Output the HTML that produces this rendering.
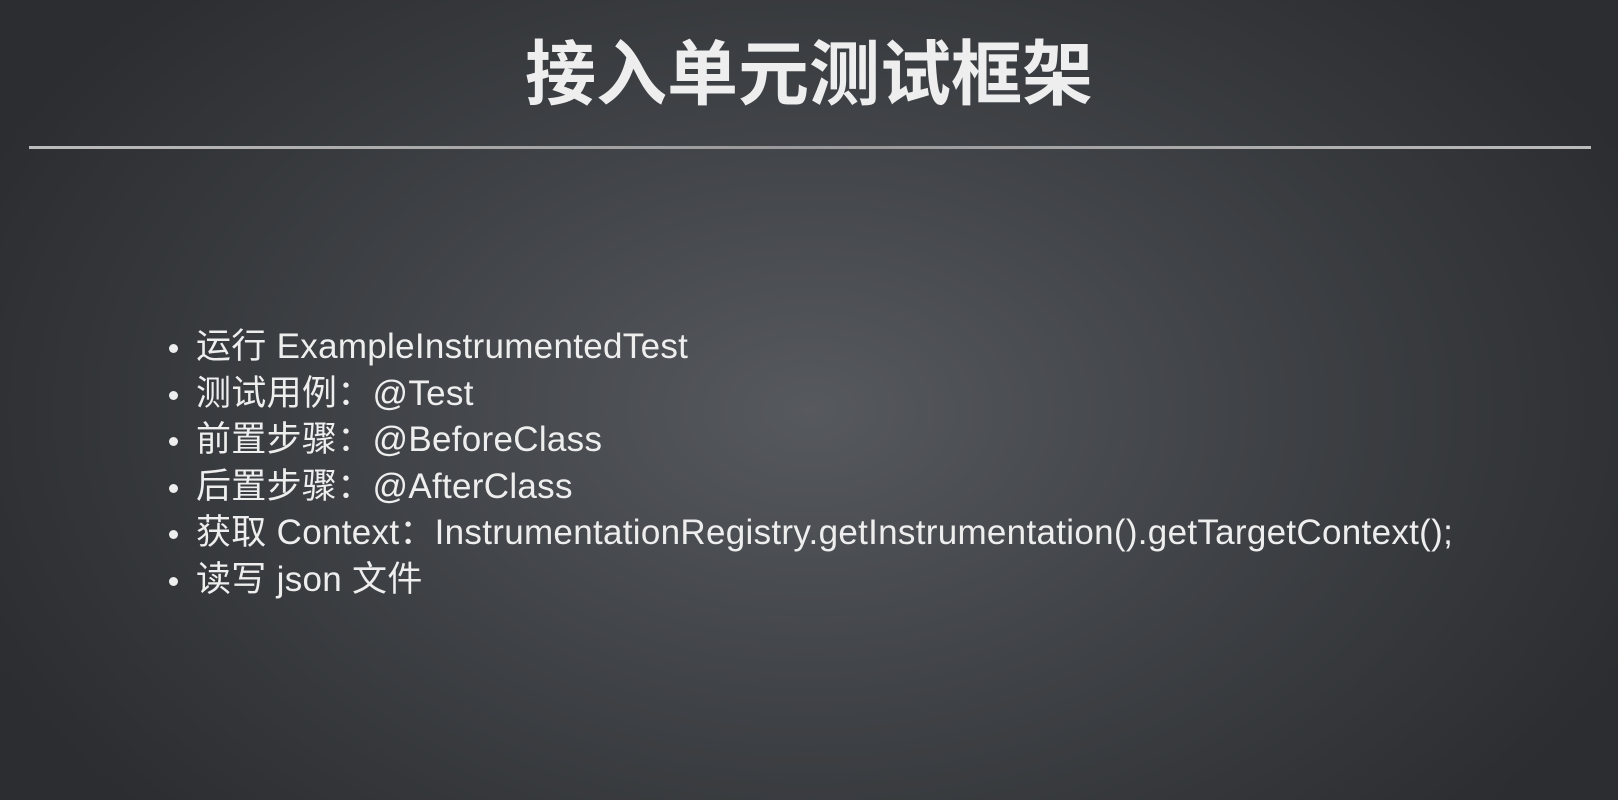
<!DOCTYPE html>
<html><head><meta charset="utf-8"><style>
html,body{margin:0;padding:0;}
body{width:1618px;height:800px;overflow:hidden;position:relative;
background:radial-gradient(ellipse 900px 600px at 810px 410px,#56595e 0%,#3f4246 50%,#2b2d30 100%);
font-family:"Liberation Sans","Noto Sans CJK SC",sans-serif;color:#eee;}
h1{position:absolute;left:0;width:1618px;top:30px;margin:0;text-align:center;font-size:71px;font-weight:bold;line-height:92px;color:#eee;font-family:"Liberation Sans","Noto Sans CJK SC",sans-serif;}
.line{position:absolute;left:29px;width:1562px;top:146px;height:3px;background:linear-gradient(90deg,#bbb,#999 50%,#bbb);}
ul{position:absolute;left:196px;top:324px;margin:0;padding:0;list-style:none;font-size:35px;line-height:46.5px;letter-spacing:0.3px;}
li{position:relative;white-space:nowrap;}
li:before{content:"";position:absolute;left:-27px;top:20px;width:9px;height:9px;border-radius:50%;background:#eee;}
</style></head><body>
<h1>接入单元测试框架</h1>
<div class="line"></div>
<ul>
<li>运行 ExampleInstrumentedTest</li>
<li>测试用例：@Test</li>
<li>前置步骤：@BeforeClass</li>
<li>后置步骤：@AfterClass</li>
<li>获取 Context：InstrumentationRegistry.getInstrumentation().getTargetContext();</li>
<li>读写 json 文件</li>
</ul>
</body></html>
